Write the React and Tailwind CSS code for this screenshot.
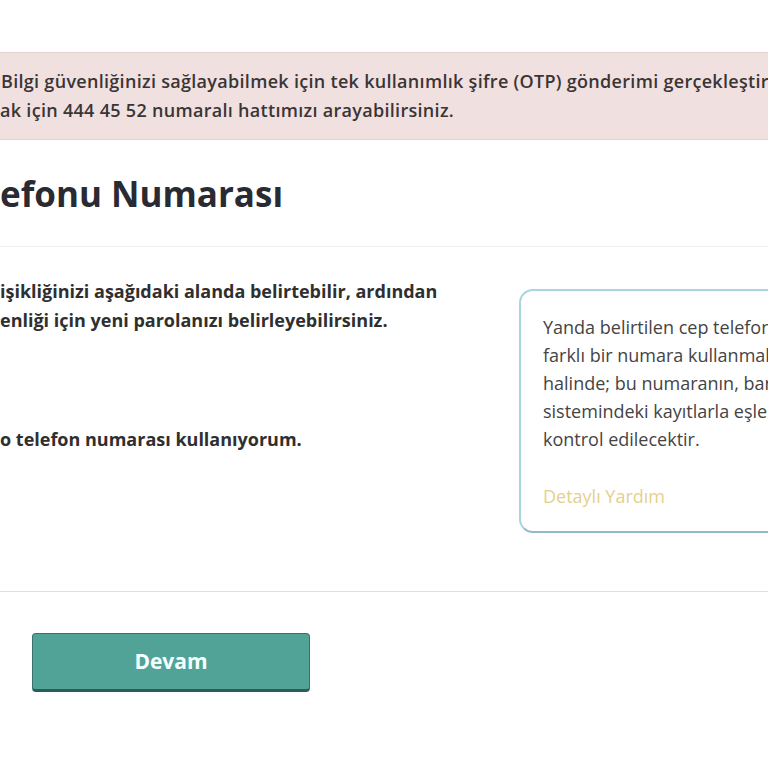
import React from "react";

const font = { fontFamily: "'Open Sans', Lato, sans-serif" };

// ekranın solundan taşan metin parçası
function Cut({ hidden, children }) {
  return (
    <span className="relative">
      <span className="absolute right-full top-0 whitespace-nowrap">{hidden}</span>
      {children}
    </span>
  );
}

export default function App() {
  return (
    <div className="w-[768px] h-[768px] overflow-hidden bg-white pt-[52px] text-[#333]" style={font}>
      {/* bilgilendirme şeridi */}
      <div className="h-[88px] bg-[#f0e0e0] border-y border-[#e5d3d3] flex flex-col justify-center text-[18px] font-semibold tracking-[0.3px] leading-[29px] text-[#3a3535]">
        <div className="whitespace-nowrap pl-[1px]">
          <Cut hidden="Sayın Müşterimiz, ">
            Bilgi güvenliğinizi sağlayabilmek için tek kullanımlık şifre (OTP) gönderimi gerçekleştirilecektir.
          </Cut>
        </div>
        <div className="whitespace-nowrap">
          <Cut hidden="Yardım alm">ak için 444 45 52 numaralı hattımızı arayabilirsiniz.</Cut>
        </div>
      </div>

      <div className="h-[107px] border-b border-[#efefef] flex items-center pt-[3px]">
        <h1 className="whitespace-nowrap text-[35px] font-bold text-[#2a2a33]">
          <Cut hidden="Cep Tel">efonu Numarası</Cut>
        </h1>
      </div>

      <div className="h-[345px] border-b border-[#dedede] flex">
        <div className="w-[519px] shrink-0 pt-[30px] text-[18px] font-bold leading-[29px] text-[#2f2f2f]">
          <div className="whitespace-nowrap">
            <Cut hidden="Cep telefonu numaranızdaki değ">
              işikliğinizi aşağıdaki alanda belirtebilir, ardından
            </Cut>
          </div>
          <div className="whitespace-nowrap">
            <Cut hidden="hesabınızın güv">enliği için yeni parolanızı belirleyebilirsiniz.</Cut>
          </div>
          <div className="whitespace-nowrap mt-[90px]">
            <Cut hidden="Farklı bir cep">o telefon numarası kullanıyorum.</Cut>
          </div>
        </div>

        <div className="mt-[42px] h-[244px] w-[320px] shrink-0 rounded-[14px] border-2 border-[#a9d6de] border-b-[#8fbcc5] pl-[22px] pt-[22px] text-[18px] leading-[28px] text-[#444]">
          <div className="whitespace-nowrap">Yanda belirtilen cep telefonu numarasından</div>
          <div className="whitespace-nowrap">farklı bir numara kullanmak istemeniz</div>
          <div className="whitespace-nowrap">halinde; bu numaranın, banka</div>
          <div className="whitespace-nowrap">sistemindeki kayıtlarla eşleşmesi</div>
          <div className="whitespace-nowrap">kontrol edilecektir.</div>
          <a className="block mt-[29px] text-[#e6cf8c]">Detaylı Yardım</a>
        </div>
      </div>

      <div className="pt-[41px] pl-[32px]">
        <button className="w-[278px] h-[59px] rounded-[4px] bg-[#52a397] border border-[#3b716b] border-b-[3px] border-b-[#2c5c57] text-[#f4ffff] text-[21px] font-bold pt-[1px]">
          Devam
        </button>
      </div>
    </div>
  );
}
